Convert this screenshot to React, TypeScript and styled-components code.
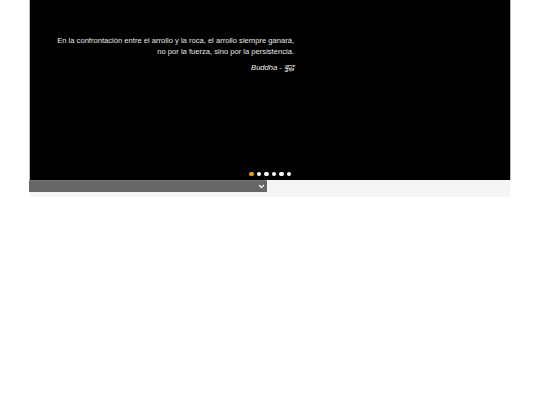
import React from "react";
import styled, { createGlobalStyle } from "styled-components";

const GlobalStyle = createGlobalStyle`
  html, body {
    margin: 0;
    padding: 0;
    background: #fff;
    font-family: "Liberation Sans", Arial, sans-serif;
  }
`;

const Wrapper = styled.div`
  width: 482px;
  margin: 0 0 0 29px;
`;

const Slider = styled.div`
  position: relative;
  height: 180px;
  background: #000;
  border-left: 1px solid #bbb;
  border-right: 1px solid #bbb;
  box-sizing: border-box;
`;

const Quote = styled.div`
  width: 264px;
  padding-top: 35px;
  text-align: right;
  color: #e8e8e8;
  font-size: 7.6px;
  line-height: 11px;
`;

const Author = styled.div`
  margin-top: 5px;
  font-style: italic;
  color: #f0f0f0;
`;

const Dots = styled.div`
  position: absolute;
  left: 0;
  right: 0;
  bottom: 4px;
  display: flex;
  justify-content: center;
  gap: 3px;
`;

const Dot = styled.span<{ $active?: boolean }>`
  width: 4.5px;
  height: 4.5px;
  border-radius: 50%;
  background: ${(p) => (p.$active ? "#f0a020" : "#fff")};
`;

const Footer = styled.div`
  height: 17px;
  background: #f5f5f5;
  margin: 0 1px;
`;

const Select = styled.div`
  width: 238px;
  height: 12px;
  margin-left: -1px;
  background: #666;
  border-top: 1px solid #777;
  box-sizing: border-box;
  display: flex;
  align-items: center;
  justify-content: flex-end;
  padding-right: 2px;
`;

const Chevron = () => (
  <svg width="7" height="5" viewBox="0 0 7 5">
    <path d="M1 1 L3.5 3.5 L6 1" stroke="#eee" strokeWidth="1.4" fill="none" />
  </svg>
);

export default function App() {
  return (
    <Wrapper>
      <GlobalStyle />
      <Slider>
        <Quote>
          En la confrontación entre el arrollo y la roca, el arrollo siempre ganará,
          <br />
          no por la fuerza, sino por la persistencia.
          <Author>Buddha - बुद्ध</Author>
        </Quote>
        <Dots>
          {[0, 1, 2, 3, 4, 5].map((i) => (
            <Dot key={i} $active={i === 0} />
          ))}
        </Dots>
      </Slider>
      <Footer>
        <Select>
          <Chevron />
        </Select>
      </Footer>
    </Wrapper>
  );
}
